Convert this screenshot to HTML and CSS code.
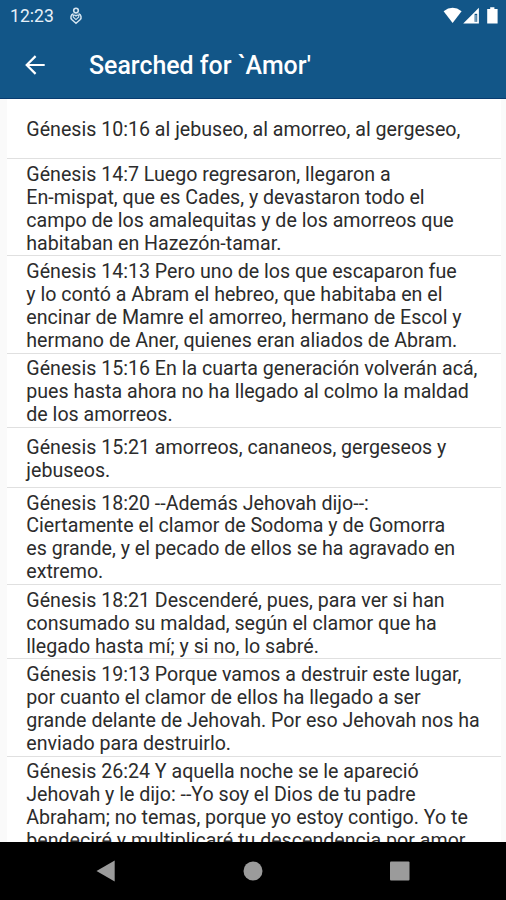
FILE: index.html
```
<!DOCTYPE html>
<html lang="es">

<head>
  <meta charset="UTF-8">
  <meta name="viewport" content="width=device-width, initial-scale=1.0">
  <title>Searched for `Amor'</title>
  <link rel="stylesheet" href="styles.css">
</head>

<body>
  <div class="screen">
    <header class="top">
      <div class="status-bar">
        <span class="clock">12:23</span>
        <svg class="notification" width="14" height="18" viewBox="0 0 14 18" fill="none" stroke="#d4e4f0">
          <circle cx="7" cy="3.6" r="2.3" stroke-width="1.6" />
          <path d="M4.5 6.8 C1.5 8 1.2 11 3 12.7 L7 16.2 L11 12.7 C12.8 11 12.5 8 9.5 6.8" stroke-width="1.5" />
          <path d="M7 12.6 L4.2 10 C3.8 7.8 6.2 7.6 7 9.1 C7.8 7.6 10.2 7.8 9.8 10 Z" stroke-width="1.1" />
        </svg>
        <div class="status-icons">
          <svg width="55" height="18" viewBox="0 0 55 18" fill="#fff">
            <path d="M0.6 4.2 Q9.6 -2.6 18.6 4.2 L9.6 16 Z" />
            <path d="M20.2 16.5 L35.9 0.8 V16.5 Z" />
            <path d="M31.6 6.8 H34.2 V14.8 H31.6 Z" fill="#125688" />
            <path d="M32.6 8 H33.3 V14.8 H32.6 Z" />
            <path d="M47.2 0.2 H51.4 V2 H54.6 V16.5 H44.2 V2 H47.2 Z" />
          </svg>
        </div>
      </div>
      <div class="toolbar">
        <svg class="back" width="20" height="20" viewBox="0 0 20 20" fill="none" stroke="#fff" stroke-width="2.2">
          <path d="M19.7 10 H2 M10.6 1.1 L1.7 10 L10.6 18.9" />
        </svg>
        <h1 class="title">Searched for `Amor'</h1>
      </div>
    </header>

    <main class="results">
      <p class="verse">Génesis 10:16 al jebuseo, al amorreo, al gergeseo,</p>
      <p class="verse">Génesis 14:7 Luego regresaron, llegaron a<br>En-mispat, que es Cades, y devastaron todo el<br>campo de los amalequitas y de los amorreos que<br>habitaban en Hazezón-tamar.</p>
      <p class="verse">Génesis 14:13 Pero uno de los que escaparon fue<br>y lo contó a Abram el hebreo, que habitaba en el<br>encinar de Mamre el amorreo, hermano de Escol y<br>hermano de Aner, quienes eran aliados de Abram.</p>
      <p class="verse">Génesis 15:16 En la cuarta generación volverán acá,<br>pues hasta ahora no ha llegado al colmo la maldad<br>de los amorreos.</p>
      <p class="verse">Génesis 15:21 amorreos, cananeos, gergeseos y<br>jebuseos.</p>
      <p class="verse">Génesis 18:20 --Además Jehovah dijo--:<br>Ciertamente el clamor de Sodoma y de Gomorra<br>es grande, y el pecado de ellos se ha agravado en<br>extremo.</p>
      <p class="verse">Génesis 18:21 Descenderé, pues, para ver si han<br>consumado su maldad, según el clamor que ha<br>llegado hasta mí; y si no, lo sabré.</p>
      <p class="verse">Génesis 19:13 Porque vamos a destruir este lugar,<br>por cuanto el clamor de ellos ha llegado a ser<br>grande delante de Jehovah. Por eso Jehovah nos ha<br>enviado para destruirlo.</p>
      <p class="verse">Génesis 26:24 Y aquella noche se le apareció<br>Jehovah y le dijo: --Yo soy el Dios de tu padre<br>Abraham; no temas, porque yo estoy contigo. Yo te<br>bendeciré y multiplicaré tu descendencia por amor</p>
    </main>

    <nav class="nav-bar">
      <svg width="20" height="22" viewBox="0 0 20 22" fill="#9b9b9b"><path d="M0.5 11 L18.7 0.5 V21.5 Z" /></svg>
      <svg width="20" height="20" viewBox="0 0 20 20" fill="#9b9b9b"><circle cx="10" cy="10" r="9.5" /></svg>
      <svg width="20" height="20" viewBox="0 0 20 20" fill="#9b9b9b"><rect x="0" y="0.5" width="19.5" height="19" rx="1" /></svg>
    </nav>
  </div>
</body>

</html>
```
FILE: styles.css
```
* {
  box-sizing: border-box;
}

body {
  margin: 0;
  font-family: Roboto, "Liberation Sans", sans-serif;
}

.screen {
  display: flex;
  flex-direction: column;
  width: 506px;
  height: 900px;
  overflow: hidden;
  background: #fafafa;
}

.top {
  flex: none;
  height: 99px;
  background: #125688;
  border-bottom: 1px solid #083c70;
  color: #fff;
}

.status-bar {
  display: flex;
  align-items: center;
  height: 31px;
  padding: 0 8px 0 10px;
}

.clock {
  width: 44px;
  font-size: 17.6px;
  color: #e6f0f8;
}

.notification {
  margin-left: 15px;
}

.status-icons {
  display: flex;
  margin-left: auto;
}

.toolbar {
  display: flex;
  align-items: center;
  height: 67px;
  padding-left: 25px;
}

.title {
  margin: 0 0 0 44px;
  padding-top: 2px;
  font-size: 24.9px;
  font-weight: 500;
  white-space: nowrap;
}

.results {
  flex: 1;
  min-height: 0;
  margin: 0 5px 0 7px;
  overflow: hidden;
  background: #fff;
}

.verse {
  display: flow-root;
  align-content: center;
  min-height: 60.3px;
  margin: 0;
  padding: 4.5px 0 0 19.3px;
  border-bottom: 1px solid #e0e0e0;
  font-size: 19.62px;
  line-height: 22.9px;
  color: #2c2c2c;
  white-space: nowrap;
}

.nav-bar {
  display: flex;
  flex: none;
  justify-content: space-between;
  align-items: center;
  height: 58px;
  padding: 0 96px 0 96px;
  background: #000;
}
```
